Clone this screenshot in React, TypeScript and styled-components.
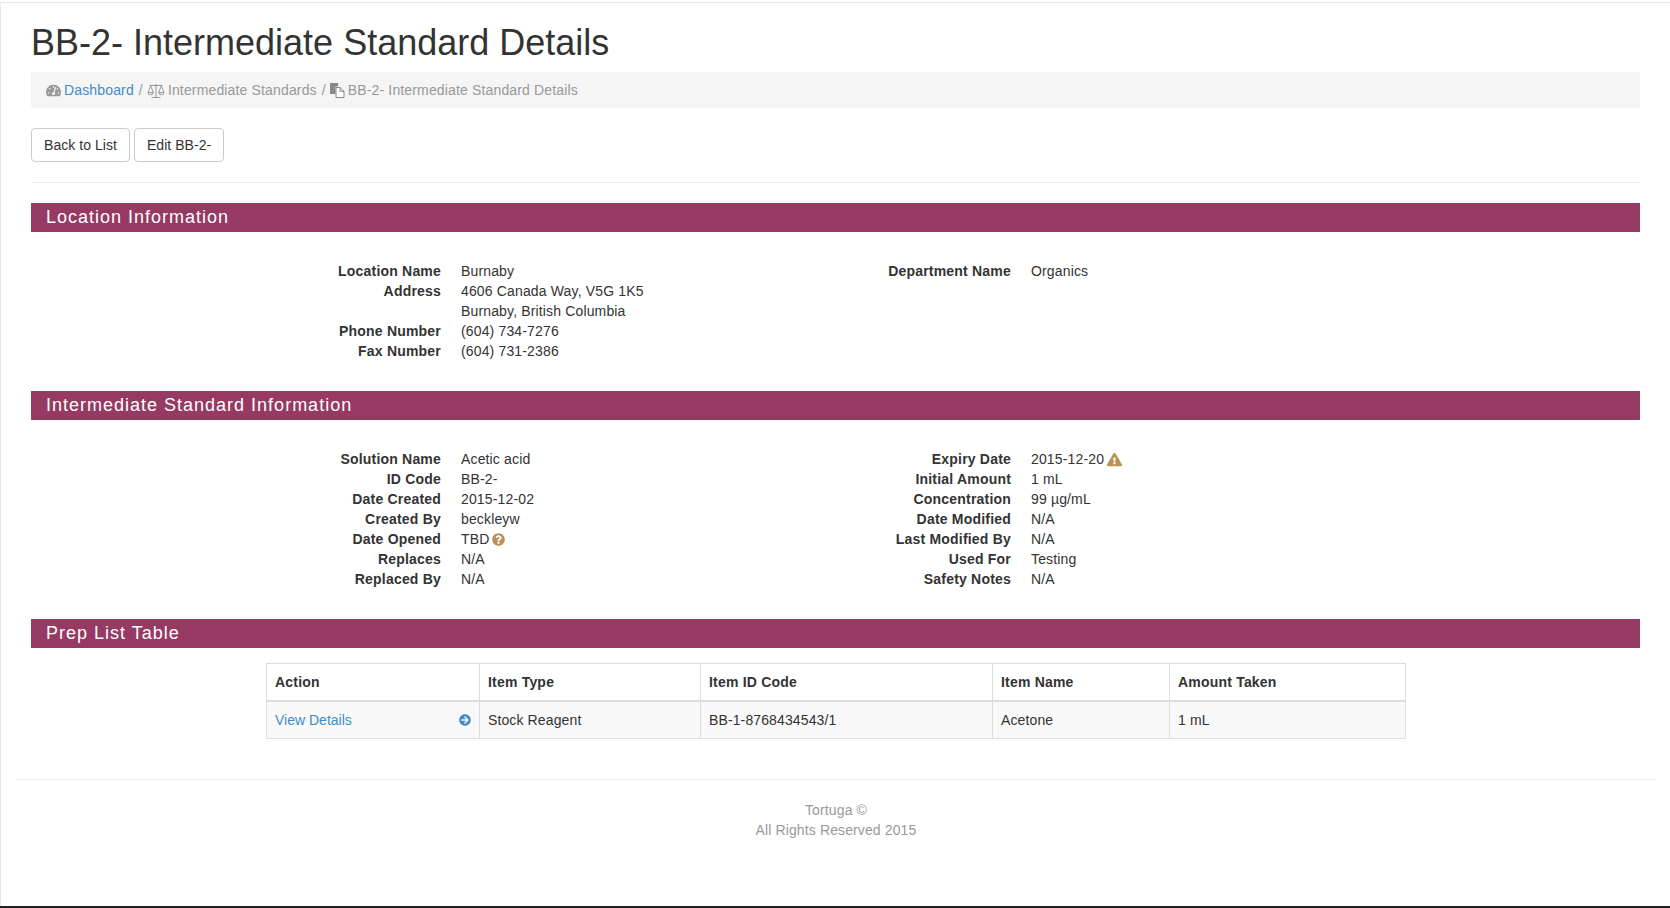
import React from 'react';
import styled, { createGlobalStyle } from 'styled-components';
import {
  FaArrowCircleRight,
  FaExclamationTriangle,
  FaQuestionCircle,
  FaTachometerAlt,
} from 'react-icons/fa';

const GlobalStyle = createGlobalStyle`
  html, body {
    margin: 0;
    padding: 0;
    background: #fff;
  }
  body {
    font-family: "Liberation Sans", Arial, sans-serif;
    font-size: 14px;
    line-height: 20px;
    letter-spacing: 0.12px;
    color: #333;
  }
  * {
    box-sizing: border-box;
  }
`;

const Page = styled.div`
  height: 908px;
  overflow: hidden;
  padding-top: 2px;
  display: flex;
  flex-direction: column;
`;

const Wrapper = styled.div`
  flex: 1;
  border-top: 1px solid #e7e7e7;
  border-left: 1px solid #e7e7e7;
  padding: 0 14px 0 15px;
`;

const Main = styled.div`
  padding: 0 16px 0 15px;
`;

const Title = styled.h1`
  margin: 20px 0 9px;
  font-size: 36px;
  font-weight: 500;
  line-height: 40px;
  letter-spacing: 0;
  color: #333;
`;

const Breadcrumb = styled.div`
  display: flex;
  align-items: center;
  height: 36px;
  margin-bottom: 20px;
  padding: 0 15px;
  background: #f5f5f5;
  color: #999;
  letter-spacing: 0.15px;
`;

const Crumb = styled.span`
  display: inline-flex;
  align-items: center;
  gap: 3px;
  color: #999;
`;

const CrumbLink = styled.a`
  color: #428bca;
  text-decoration: none;
`;

const CrumbDivider = styled.span`
  padding: 0 4px 0 5px;
  color: #999;
`;

const CrumbIcon = styled.svg`
  display: block;
  flex: none;
`;

const ButtonRow = styled.div`
  display: flex;
  gap: 4px;
`;

const Button = styled.button`
  height: 34px;
  padding: 6px 12px;
  border: 1px solid #ccc;
  border-radius: 4px;
  background: #fff;
  color: #333;
  font: inherit;
  letter-spacing: 0.05px;
`;

const Rule = styled.hr`
  height: 1px;
  margin: 20px 0;
  border: 0;
  background: #eee;
`;

const SectionBar = styled.h2`
  height: 29px;
  margin: 0;
  padding: 0 15px;
  background: #963a63;
  color: #fff;
  font-size: 18px;
  font-weight: 400;
  line-height: 29px;
  letter-spacing: 1px;
`;

const DetailGrid = styled.div`
  display: grid;
  grid-template-columns: 570px 570px;
  margin: 29px 234px 30px 235px;
`;

const DetailList = styled.dl`
  display: grid;
  grid-template-columns: 160px 1fr;
  column-gap: 20px;
  grid-auto-rows: 20px;
  align-content: start;
  margin: 0;
  padding-left: 15px;
`;

const Term = styled.dt`
  font-weight: 700;
  text-align: right;
  white-space: nowrap;
  letter-spacing: 0.2px;
`;

const Value = styled.dd`
  grid-column: 2;
  display: flex;
  align-items: center;
  gap: 3px;
  margin: 0;
  letter-spacing: 0.15px;
`;

const Empty = styled.dt`
  grid-column: 1;
`;

const WarnIcon = styled.span<{ $size: number }>`
  display: inline-flex;
  color: #bb9155;
  font-size: ${(p) => p.$size}px;
`;

const TableWrap = styled.div`
  margin: 15px 234px 0 235px;
`;

const Table = styled.table`
  width: 1139px;
  table-layout: fixed;
  border-collapse: collapse;
`;

const HeadCell = styled.th<{ $width: number }>`
  width: ${(p) => p.$width}px;
  padding: 8px;
  border: 1px solid #ddd;
  border-bottom-width: 2px;
  text-align: left;
  font-weight: 700;
  letter-spacing: 0.2px;
`;

const BodyRow = styled.tr`
  background: #f9f9f9;
`;

const Cell = styled.td`
  padding: 8px;
  border: 1px solid #ddd;
`;

const ActionLink = styled.a`
  display: flex;
  align-items: center;
  justify-content: space-between;
  color: #428bca;
  text-decoration: none;
  letter-spacing: 0;
`;

const Footer = styled.footer`
  margin-top: 40px;
  border-top: 1px solid #eee;
  padding-top: 20px;
  text-align: center;
  color: #999;
`;

const FooterLine = styled.div`
  height: 20px;
`;

const BottomEdge = styled.div`
  height: 2px;
  background: #222;
`;

const DashboardIcon = () => <FaTachometerAlt size={15} color="#999" />;

const ScaleIcon = () => (
  <CrumbIcon width="18" height="15" viewBox="0 0 18 15" fill="none" stroke="#999" strokeWidth="1">
    <path d="M9 1v13M4.5 14.5h9M2.5 2.5h13" />
    <path d="M3.7 3L1 9.5h5.4zM14.3 3l-2.7 6.5H17z" />
    <path d="M1 9.5a2.7 2.2 0 0 0 5.4 0M11.6 9.5a2.7 2.2 0 0 0 5.4 0" />
  </CrumbIcon>
);

const FilesIcon = () => (
  <CrumbIcon width="15" height="15" viewBox="0 0 15 15">
    <path d="M0 0h8v3.5H5.5V11H0z" fill="#888" />
    <path d="M6 4.5h4l4 3.8v6.2H6z" fill="#fff" stroke="#888" />
    <path d="M10 4.5v3.8h4" fill="none" stroke="#888" />
  </CrumbIcon>
);

const locationLeft: [string, React.ReactNode][] = [
  ['Location Name', 'Burnaby'],
  ['Address', '4606 Canada Way, V5G 1K5'],
  ['', 'Burnaby, British Columbia'],
  ['Phone Number', '(604) 734-7276'],
  ['Fax Number', '(604) 731-2386'],
];

const infoLeft: [string, React.ReactNode][] = [
  ['Solution Name', 'Acetic acid'],
  ['ID Code', 'BB-2-'],
  ['Date Created', '2015-12-02'],
  ['Created By', 'beckleyw'],
  [
    'Date Opened',
    <>
      TBD
      <WarnIcon $size={13}>
        <FaQuestionCircle />
      </WarnIcon>
    </>,
  ],
  ['Replaces', 'N/A'],
  ['Replaced By', 'N/A'],
];

const infoRight: [string, React.ReactNode][] = [
  [
    'Expiry Date',
    <>
      2015-12-20
      <WarnIcon $size={15}>
        <FaExclamationTriangle />
      </WarnIcon>
    </>,
  ],
  ['Initial Amount', '1 mL'],
  ['Concentration', '99 µg/mL'],
  ['Date Modified', 'N/A'],
  ['Last Modified By', 'N/A'],
  ['Used For', 'Testing'],
  ['Safety Notes', 'N/A'],
];

const columns: [string, number][] = [
  ['Action', 213],
  ['Item Type', 221],
  ['Item ID Code', 292],
  ['Item Name', 177],
  ['Amount Taken', 236],
];

const Details = ({ rows }: { rows: [string, React.ReactNode][] }) => (
  <DetailList>
    {rows.map(([term, value], i) => (
      <React.Fragment key={i}>
        {term ? <Term>{term}</Term> : <Empty />}
        <Value>{value}</Value>
      </React.Fragment>
    ))}
  </DetailList>
);

const App: React.FC = () => {
  return (
    <Page>
      <GlobalStyle />
      <Wrapper>
        <Main>
          <Title>BB-2- Intermediate Standard Details</Title>
          <Breadcrumb>
            <Crumb>
              <DashboardIcon />
              <CrumbLink href="#">Dashboard</CrumbLink>
            </Crumb>
            <CrumbDivider>/</CrumbDivider>
            <Crumb>
              <ScaleIcon />
              Intermediate Standards
            </Crumb>
            <CrumbDivider>/</CrumbDivider>
            <Crumb>
              <FilesIcon />
              BB-2- Intermediate Standard Details
            </Crumb>
          </Breadcrumb>
          <ButtonRow>
            <Button>Back to List</Button>
            <Button>Edit BB-2-</Button>
          </ButtonRow>
          <Rule />

          <SectionBar>Location Information</SectionBar>
          <DetailGrid>
            <Details rows={locationLeft} />
            <Details rows={[['Department Name', 'Organics']]} />
          </DetailGrid>

          <SectionBar>Intermediate Standard Information</SectionBar>
          <DetailGrid>
            <Details rows={infoLeft} />
            <Details rows={infoRight} />
          </DetailGrid>

          <SectionBar>Prep List Table</SectionBar>
          <TableWrap>
            <Table>
              <thead>
                <tr>
                  {columns.map(([label, width]) => (
                    <HeadCell key={label} $width={width}>
                      {label}
                    </HeadCell>
                  ))}
                </tr>
              </thead>
              <tbody>
                <BodyRow>
                  <Cell>
                    <ActionLink href="#">
                      View Details
                      <FaArrowCircleRight size={12} />
                    </ActionLink>
                  </Cell>
                  <Cell>Stock Reagent</Cell>
                  <Cell>BB-1-8768434543/1</Cell>
                  <Cell>Acetone</Cell>
                  <Cell>1 mL</Cell>
                </BodyRow>
              </tbody>
            </Table>
          </TableWrap>
        </Main>
        <Footer>
          <FooterLine>Tortuga ©</FooterLine>
          <FooterLine>All Rights Reserved 2015</FooterLine>
        </Footer>
      </Wrapper>
      <BottomEdge />
    </Page>
  );
};

export default App;
